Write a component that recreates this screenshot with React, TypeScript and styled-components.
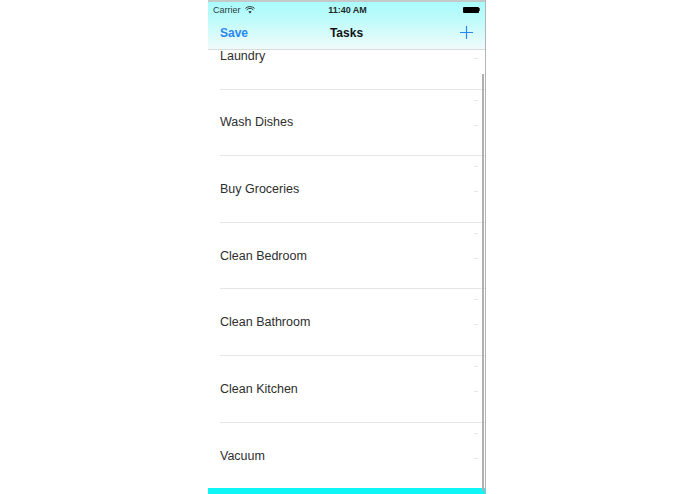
import React from "react";
import styled, { createGlobalStyle } from "styled-components";

const tasks = [
  "Laundry",
  "Wash Dishes",
  "Buy Groceries",
  "Clean Bedroom",
  "Clean Bathroom",
  "Clean Kitchen",
  "Vacuum",
];

const GlobalStyle = createGlobalStyle`
  html, body {
    margin: 0;
    padding: 0;
    background: #ffffff;
    height: 100%;
    overflow: hidden;
  }
  #root {
    height: 100%;
  }
`;

const Page = styled.div`
  display: flex;
  justify-content: flex-start;
  height: 494px;
  padding-left: 208px;
  font-family: "Liberation Sans", Arial, sans-serif;
`;

const Phone = styled.div`
  position: relative;
  width: 277px;
  height: 494px;
  display: flex;
  flex-direction: column;
  border-right: 1px solid #b4b4b4;
  background: #ffffff;
  overflow: hidden;
`;

const Header = styled.header`
  flex: none;
  height: 50px;
  box-sizing: border-box;
  border-top: 2px solid #c4caca;
  border-bottom: 1px solid #d6dcdc;
  background: linear-gradient(180deg, #aafbfc 0%, #bdfbfb 35%, #f1fbfb 100%);
`;

const StatusBar = styled.div`
  height: 15px;
  padding: 0 5px;
  display: grid;
  grid-template-columns: 1fr auto 1fr;
  align-items: center;
  font-size: 9px;
  color: #2c3a3a;
`;

const Carrier = styled.div`
  display: flex;
  align-items: center;
  gap: 4px;
`;

const Clock = styled.div`
  font-weight: 700;
  color: #1f2a2a;
  padding-left: 2px;
`;

const Battery = styled.div`
  justify-self: end;
  display: flex;
  align-items: center;
`;

const BatteryBody = styled.span`
  display: block;
  width: 16px;
  height: 6px;
  border-radius: 1px;
  background: #000000;
`;

const BatteryNub = styled.span`
  display: block;
  width: 1px;
  height: 3px;
  background: #555555;
`;

const NavBar = styled.div`
  height: 31px;
  padding: 0 12px;
  display: grid;
  grid-template-columns: 1fr auto 1fr;
  align-items: center;
`;

const SaveButton = styled.span`
  font-size: 12px;
  font-weight: 700;
  color: #2a86f0;
`;

const Title = styled.span`
  font-size: 12px;
  font-weight: 700;
  color: #101414;
`;

const AddButton = styled.span`
  justify-self: end;
  display: flex;
`;

const ListViewport = styled.div`
  flex: 1;
  min-height: 0;
  overflow: hidden;
`;

const List = styled.div`
  margin-top: -27px;
`;

const Row = styled.div`
  position: relative;
  height: 66.6px;
  margin-left: 12px;
  box-sizing: border-box;
  display: flex;
  align-items: center;
  border-bottom: 1px solid #e6e6e6;
  font-size: 12.5px;
  color: #2e2e2e;

  &:last-child {
    border-bottom: none;
  }
`;

const Ticks = styled.div`
  position: absolute;
  right: 7px;
  top: 10px;
  display: flex;
  flex-direction: column;
  gap: 24px;
`;

const Tick = styled.span`
  display: block;
  width: 4px;
  height: 1px;
  background: #e8e8e8;
`;

const BottomBar = styled.div`
  flex: none;
  height: 6px;
  background: #0ef6f6;
`;

const ScrollIndicator = styled.div`
  position: absolute;
  top: 74px;
  right: 1px;
  bottom: 3px;
  width: 2.5px;
  background: #b0b0b0;
`;

function WifiIcon() {
  return (
    <svg width="10" height="8" viewBox="0 0 10 8">
      <path d="M5 7.6 3.4 5.7a2.4 2.4 0 0 1 3.2 0z" fill="#2c3a3a" />
      <path d="M1.6 3.9a5 5 0 0 1 6.8 0M.4 2.4a6.8 6.8 0 0 1 9.2 0" fill="none" stroke="#2c3a3a" strokeWidth="1" />
    </svg>
  );
}

function PlusIcon() {
  return (
    <svg width="13" height="13" viewBox="0 0 13 13">
      <path d="M6.5 0v13M0 6.5h13" stroke="#2a86f0" strokeWidth="1.2" fill="none" />
    </svg>
  );
}

export default function App() {
  return (
    <Page>
      <GlobalStyle />
      <Phone>
        <Header>
          <StatusBar>
            <Carrier>
              Carrier <WifiIcon />
            </Carrier>
            <Clock>11:40 AM</Clock>
            <Battery>
              <BatteryBody />
              <BatteryNub />
            </Battery>
          </StatusBar>
          <NavBar>
            <SaveButton>Save</SaveButton>
            <Title>Tasks</Title>
            <AddButton>
              <PlusIcon />
            </AddButton>
          </NavBar>
        </Header>
        <ListViewport>
          <List>
            {tasks.map((task) => (
              <Row key={task}>
                {task}
                <Ticks>
                  <Tick />
                  <Tick />
                </Ticks>
              </Row>
            ))}
          </List>
        </ListViewport>
        <BottomBar />
        <ScrollIndicator />
      </Phone>
    </Page>
  );
}
